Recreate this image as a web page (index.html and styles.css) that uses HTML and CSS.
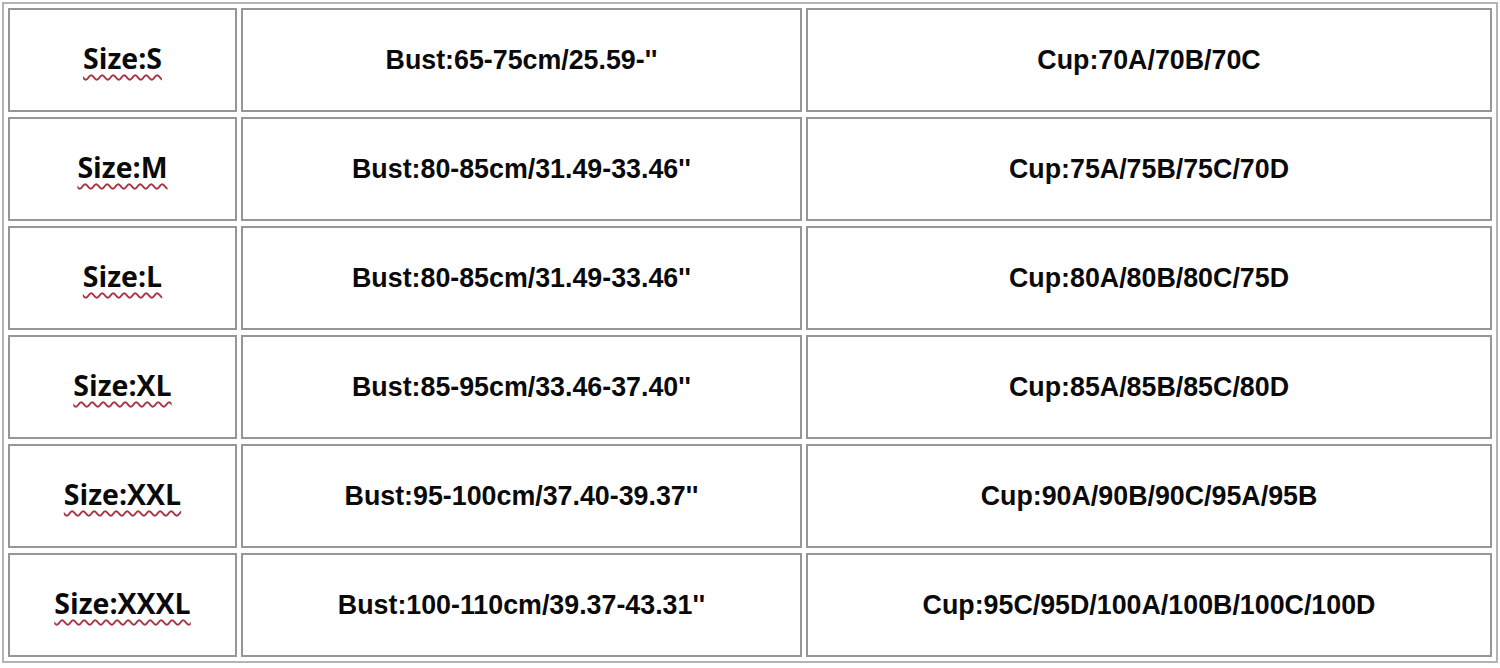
FILE: index.html
```html
<!DOCTYPE html>
<html lang="en">
<head>
<meta charset="utf-8">
<title>Size chart</title>
<link rel="stylesheet" href="styles.css">
</head>
<body>
<div class="chart">
  <div class="cell size"><span class="spell">Size:S</span></div>
  <div class="cell">Bust:65-75cm/25.59-''</div>
  <div class="cell">Cup:70A/70B/70C</div>

  <div class="cell size"><span class="spell">Size:M</span></div>
  <div class="cell">Bust:80-85cm/31.49-33.46''</div>
  <div class="cell">Cup:75A/75B/75C/70D</div>

  <div class="cell size"><span class="spell">Size:L</span></div>
  <div class="cell">Bust:80-85cm/31.49-33.46''</div>
  <div class="cell">Cup:80A/80B/80C/75D</div>

  <div class="cell size"><span class="spell">Size:XL</span></div>
  <div class="cell">Bust:85-95cm/33.46-37.40''</div>
  <div class="cell">Cup:85A/85B/85C/80D</div>

  <div class="cell size"><span class="spell">Size:XXL</span></div>
  <div class="cell">Bust:95-100cm/37.40-39.37''</div>
  <div class="cell">Cup:90A/90B/90C/95A/95B</div>

  <div class="cell size"><span class="spell">Size:XXXL</span></div>
  <div class="cell">Bust:100-110cm/39.37-43.31''</div>
  <div class="cell">Cup:95C/95D/100A/100B/100C/100D</div>
</div>
</body>
</html>
```

FILE: styles.css
```css
html, body {
  margin: 0;
  padding: 0;
  background: #ffffff;
}

body {
  padding: 2px;
}

.chart {
  width: 1496px;
  box-sizing: border-box;
  border: 2px solid #b4b4b4;
  padding: 4px;
  display: grid;
  grid-template-columns: 229px 561px 1fr;
  grid-auto-rows: 104px;
  column-gap: 4px;
  row-gap: 5px;
}

.cell {
  box-sizing: border-box;
  border: 2px solid #969696;
  display: flex;
  align-items: center;
  justify-content: center;
  font-family: "Liberation Sans", Arial, sans-serif;
  font-weight: bold;
  font-size: 26.8px;
  color: #0a0a0a;
  white-space: nowrap;
}

.size {
  font-family: "Open Sans", "Noto Sans", sans-serif;
  font-size: 28.5px;
  padding-bottom: 4px;
}

.spell {
  text-decoration-line: underline;
  text-decoration-style: wavy;
  text-decoration-color: #a83444;
  text-decoration-thickness: 1.5px;
  text-underline-offset: 5px;
}
```
